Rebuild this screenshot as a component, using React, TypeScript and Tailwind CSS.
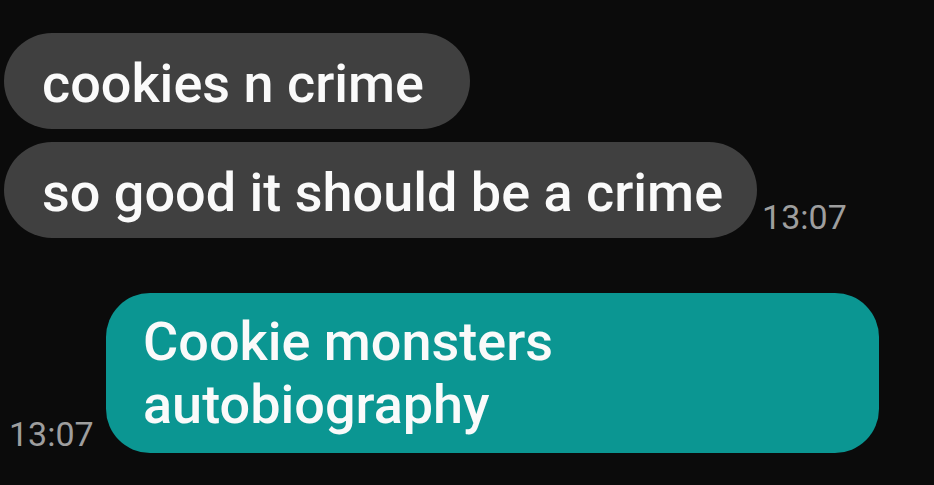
export default function App() {
  return (
    <div
      className="w-[934px] h-[485px] bg-[#0b0b0b] overflow-hidden text-[#fafafa]"
      style={{ fontFamily: 'Roboto, "Noto Sans", sans-serif' }}
    >
      <div className="flex flex-col pt-[33px] pl-[4px]">
        {/* incoming */}
        <div className="flex">
          <div className="h-[96px] rounded-full bg-[#404040] pl-[38px] pr-[46px] flex items-center pt-[4px] text-[54px] font-medium leading-[63px]">
            cookies n crime
          </div>
        </div>
        <div className="flex items-end mt-[13px]">
          <div className="h-[96px] rounded-full bg-[#404040] pl-[38px] pr-[34px] flex items-center pt-[4px] text-[54px] font-medium leading-[63px]">
            so good it should be a crime
          </div>
          <span className="ml-[5px] mb-[3px] text-[34px] text-[#9e9e9e] leading-[36px]">13:07</span>
        </div>

        {/* outgoing */}
        <div className="flex items-end mt-[55px]">
          <span className="ml-[5px] mb-[1px] w-[97px] text-[34px] text-[#9e9e9e] leading-[36px]">13:07</span>
          <div className="w-[773px] rounded-[44px] bg-[#0b9692] pl-[37px] pr-[30px] py-[17px] text-[54px] font-medium leading-[63px]">
            Cookie monsters autobiography
          </div>
        </div>
      </div>
    </div>
  )
}
